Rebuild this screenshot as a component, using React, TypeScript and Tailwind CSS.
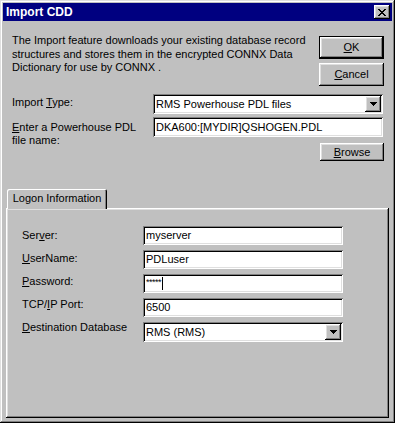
const raised =
  'shadow-[inset_-1px_-1px_#000,inset_1px_1px_#fff,inset_-2px_-2px_#808080,inset_2px_2px_#dfdfdf]';
const sunken =
  'shadow-[inset_1px_1px_#808080,inset_-1px_-1px_#fff,inset_2px_2px_#000,inset_-2px_-2px_#dfdfdf]';

function CloseGlyph() {
  const rows = ['XX....XX', '.XX..XX.', '..XXXX..', '...XX...', '..XXXX..', '.XX..XX.', 'XX....XX'];
  return (
    <svg width="8" height="7" viewBox="0 0 8 7" shapeRendering="crispEdges">
      {rows.map((r, y) =>
        r.split('').map((c, x) => (c === 'X' ? <rect key={`${x}-${y}`} x={x} y={y} width="1" height="1" fill="#000" /> : null))
      )}
    </svg>
  );
}

function DownArrow() {
  return (
    <svg width="7" height="4" viewBox="0 0 7 4" shapeRendering="crispEdges">
      <rect x="0" y="0" width="7" height="1" fill="#000" />
      <rect x="1" y="1" width="5" height="1" fill="#000" />
      <rect x="2" y="2" width="3" height="1" fill="#000" />
      <rect x="3" y="3" width="1" height="1" fill="#000" />
    </svg>
  );
}

function Combo({ value, width }: { value: string; width: string }) {
  return (
    <div className={`flex h-[20px] ${width} items-center bg-white py-[2px] pl-[3px] pr-[2px] ${sunken}`}>
      <span className="flex-1 truncate">{value}</span>
      <div className={`flex h-[16px] w-[16px] shrink-0 items-center justify-center bg-[#c0c0c0] ${raised}`}>
        <DownArrow />
      </div>
    </div>
  );
}

function Field({ children }: { children: React.ReactNode }) {
  return <div className={`flex h-[19px] w-[200px] items-center bg-white pl-[3px] ${sunken}`}>{children}</div>;
}

export default function App() {
  return (
    <div className="h-[423px] w-[395px] bg-white">
      <div
        className={`flex h-[423px] w-[395px] flex-col bg-[#c0c0c0] p-[3px] font-['Liberation_Sans',Arial,sans-serif] text-[11px] leading-[13px] text-black shadow-[inset_-1px_-1px_#000,inset_1px_1px_#dfdfdf,inset_-2px_-2px_#808080,inset_2px_2px_#fff]`}
      >
        {/* Title bar */}
        <div className="flex h-[18px] shrink-0 items-center justify-between bg-[#000080] pl-[3px] pr-[2px]">
          <span className="text-[12px] font-bold text-white">Import CDD</span>
          <div className={`flex h-[14px] w-[16px] items-center justify-center bg-[#c0c0c0] ${raised}`}>
            <CloseGlyph />
          </div>
        </div>

        {/* Top area */}
        <div className="flex flex-col pl-[9px] pr-[8px] pt-[13px]">
          <div className="flex justify-between">
            <p className="leading-[13.5px]">
              The Import feature downloads your existing database record
              <br />
              structures and stores them in the encrypted CONNX Data
              <br />
              Dictionary for use by CONNX .
            </p>
            <div className="mt-[2px] flex flex-col gap-[4px]">
              <div className="h-[23px] w-[65px] border border-black">
                <div className={`flex h-full w-full items-center justify-center ${raised}`}>
                  <span>
                    <u>O</u>K
                  </span>
                </div>
              </div>
              <div className={`flex h-[23px] w-[65px] items-center justify-center ${raised}`}>
                <span>
                  <u>C</u>ancel
                </span>
              </div>
            </div>
          </div>

          <div className="mt-[8px] flex items-start">
            <div className="w-[141px] pt-[2px]">
              Import <u>T</u>ype:
            </div>
            <Combo value="RMS Powerhouse PDL files" width="w-[230px]" />
          </div>

          <div className="mt-[3px] flex h-[20px] items-start">
            <div className="w-[141px] pt-[4px]">
              <u>E</u>nter a Powerhouse PDL
              <br />
              file name:
            </div>
            <div className={`flex h-[20px] w-[230px] items-center bg-white pl-[3px] ${sunken}`}>
              DKA600:[MYDIR]QSHOGEN.PDL
            </div>
          </div>

          <div className="mt-[6px] flex justify-end">
            <div className={`flex h-[18px] w-[64px] items-center justify-center ${raised}`}>
              <span>
                <u>B</u>rowse
              </span>
            </div>
          </div>
        </div>

        {/* Tab area */}
        <div className="mt-[28px] flex flex-1 flex-col px-[3px] pb-[2px]">
          <div className="flex pl-[1px]">
            <div className="relative z-10 -mb-[1px] flex h-[20px] w-[100px] items-center justify-center rounded-t-[2px] bg-[#c0c0c0] pb-[1px] shadow-[inset_1px_1px_#fff,inset_-1px_0_#000,inset_-2px_0_#808080]">
              Logon Information
            </div>
          </div>
          <div className={`flex flex-1 pl-[16px] pt-[18px] ${raised}`}>
            <div className="flex w-[121px] flex-col gap-[10px] pt-[2.5px]">
              <div>
                Ser<u>v</u>er:
              </div>
              <div>
                <u>U</u>serName:
              </div>
              <div>
                <u>P</u>assword:
              </div>
              <div>
                TCP/<u>I</u>P Port:
              </div>
              <div>
                <u>D</u>estination Database
              </div>
            </div>
            <div className="flex flex-col gap-[5px]">
              <Field>myserver</Field>
              <Field>PDLuser</Field>
              <Field>
                <span className="-mt-[4px] text-[9px] leading-[10px] tracking-[-0.5px]">*****</span>
                <span className="ml-[1px] h-[13px] w-[1px] bg-black" />
              </Field>
              <Field>6500</Field>
              <Combo value="RMS (RMS)" width="w-[200px]" />
            </div>
          </div>
        </div>
      </div>
    </div>
  );
}
